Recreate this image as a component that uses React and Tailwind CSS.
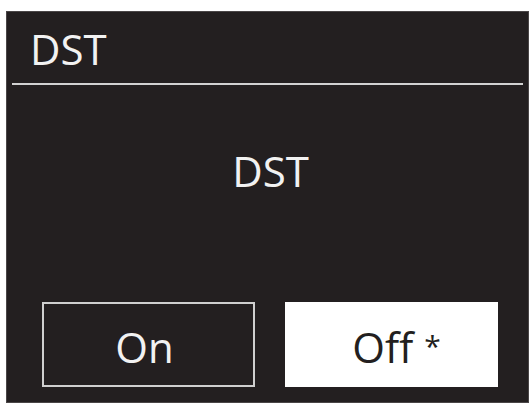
import React from "react";

export default function App() {
  return (
    <div className="w-[531px] h-[406px] bg-white pt-[11px] pl-[6px]" style={{ fontFamily: '"Open Sans", "Noto Sans", sans-serif' }}>
      <div className="w-[523px] h-[392px] bg-[#231f20] border border-[#4a4647] flex flex-col text-[#f2f2f2]">
        {/* title bar */}
        <div className="pl-[23px] pt-[16px] text-[42px] leading-none">DST</div>
        <div className="mt-[13px] ml-[5px] mr-[5px] h-[2px] bg-[#d2d2d2]" />

        {/* setting name */}
        <div className="mt-[65px] text-center text-[42px] leading-none pl-[6px]">DST</div>

        {/* options */}
        <div className="mt-auto mb-[15px] ml-[35px] flex gap-[30px]">
          <button className="w-[213px] h-[85px] border-2 border-[#cfcfcf] flex items-center justify-center pt-[4px] pr-[8px] text-[42px] leading-none text-[#f2f2f2]">
            On
          </button>
          <button className="w-[213px] h-[85px] bg-white flex items-center justify-center pt-[4px] pl-[10px] text-[42px] leading-none text-[#231f20]">
            <span>
              Off <span className="text-[30px] align-[6px]">*</span>
            </span>
          </button>
        </div>
      </div>
    </div>
  );
}
